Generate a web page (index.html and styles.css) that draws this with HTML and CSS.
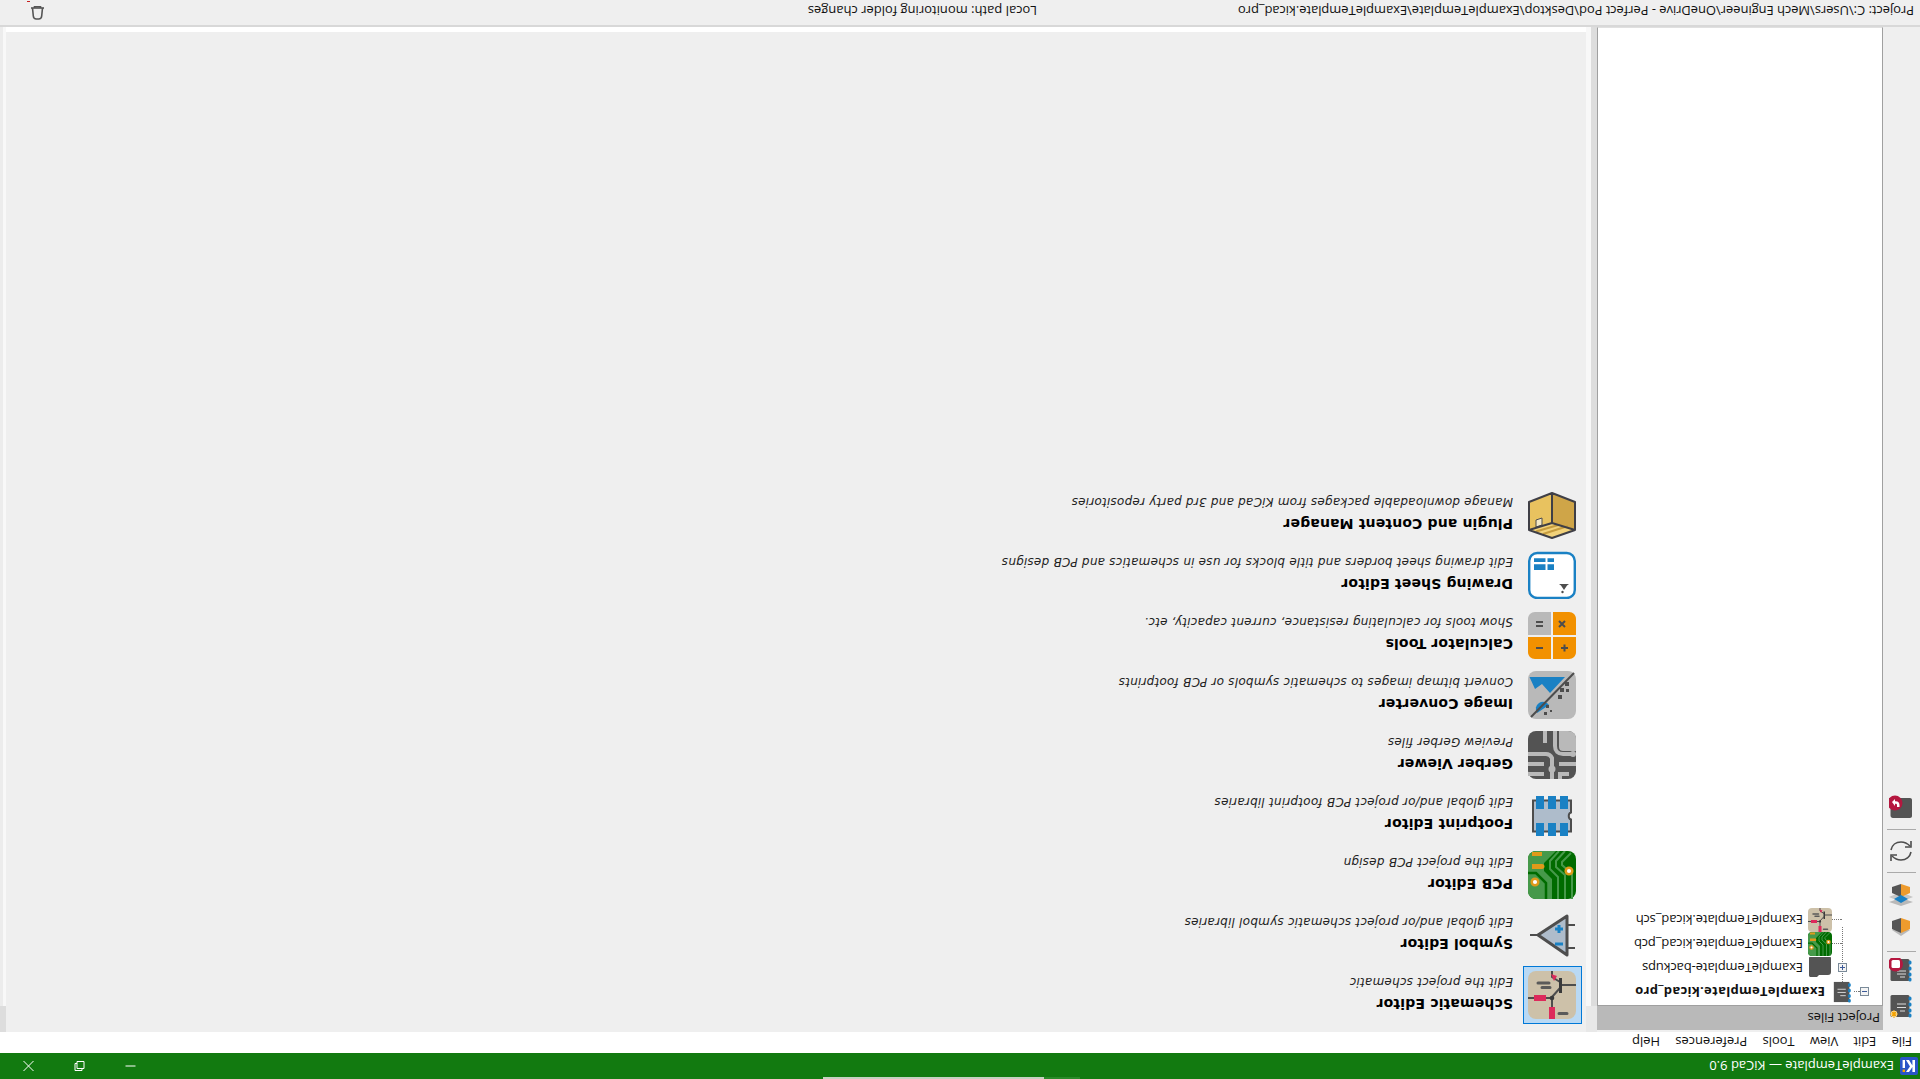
FILE: index.html
```html
<!DOCTYPE html>
<html lang="en">
<head>
<meta charset="utf-8">
<title>ExampleTemplate — KiCad 9.0</title>
<link rel="stylesheet" href="styles.css">
</head>
<body>
<div class="screen">
  <header class="titlebar">
    <div class="grab"></div>
    <svg class="app-icon" viewBox="0 0 18 18"><rect width="18" height="18" rx="2" fill="#2a55c8"/><path d="M3 3h2.6v5L9 3h3L8 8.6 12 15H9L5.6 9.6V15H3z" fill="#fff"/><rect x="13" y="7" width="2.4" height="8" fill="#fff"/><rect x="13" y="3" width="2.4" height="2.4" fill="#f7a600"/></svg>
    <span class="title-text">ExampleTemplate — KiCad 9.0</span>
    <div class="win-controls">
      <svg class="win" viewBox="0 0 12 12"><path d="M1 6h10" stroke="#fff"/></svg>
      <svg class="win" viewBox="0 0 12 12"><path d="M1.5 3.5h7v7h-7zM3.5 3.5v-2h7v7h-2" fill="none" stroke="#fff"/></svg>
      <svg class="win" viewBox="0 0 12 12"><path d="M1 1l10 10M11 1L1 11" stroke="#fff"/></svg>
    </div>
  </header>
  <nav class="menubar">
    <span class="menu-item">File</span><span class="menu-item">Edit</span><span class="menu-item">View</span><span class="menu-item">Tools</span><span class="menu-item">Preferences</span><span class="menu-item">Help</span>
  </nav>
  <div class="workspace">
    <aside class="toolbar">
      <svg class="tool" viewBox="0 0 24 24"><g transform="rotate(180 12 12)"><rect x="1.500" y="0" width="19" height="22" rx="1.500" fill="#545454"/><path d="M8 9h9M8 12.500h9M11 16h5" stroke="#ddd" stroke-width="1"/><path d="M21 3v1M21 9v1M21 15v1M21 20v1" stroke="#1a81c4" stroke-width="3" stroke-linecap="round"/><circle cx="5" cy="19" r="3.200" fill="#fff"/><path d="M5 15v8M1 19h8M2.500 16.500l5 5M7.500 16.500l-5 5" stroke="#f5a300" stroke-width="1.100"/></g></svg>
      <svg class="tool t-gap" viewBox="0 0 24 24"><g transform="rotate(180 12 12)"><rect x="1.500" y="1" width="19" height="22" rx="1.500" fill="#545454"/><path d="M8 13h9M8 16h9M11 19h5" stroke="#ddd" stroke-width="1"/><path d="M21 4v1M21 10v1M21 16v1M21 21v1" stroke="#1a81c4" stroke-width="3" stroke-linecap="round"/><circle cx="6.500" cy="6" r="7.500" fill="#b5173f"/><rect x="2.500" y="2" width="8.500" height="8" rx="1.500" fill="#fff"/></g></svg>
      <hr class="tool-sep s1">
      <svg class="tool t-after-sep" viewBox="0 0 24 24"><g transform="rotate(180 12 12)"><path d="M12 10l9 4-9 6-9-6z" fill="#b9b9b9"/><path d="M12 2l9 3v8l-9 4z" fill="#ee9b2d"/><path d="M12 2L3 5v8l9 4z" fill="#555"/></g></svg>
      <svg class="tool t-3d" viewBox="0 0 24 24"><g transform="rotate(180 12 12)"><path d="M12 14l12 4-12 4-12-4z" fill="#b9b9b9"/><path d="M12 8l12 5-12 5-12-5z" fill="#c6c6c6"/><path d="M12 0l9 3v6l-9 4z" fill="#ee9b2d"/><path d="M12 0L3 3v6l9 4z" fill="#555"/><path d="M12 11l7 4-7 4-7-4z" fill="#1a81c4"/></g></svg>
      <hr class="tool-sep s2">
      <svg class="tool t-after-sep2" viewBox="0 0 24 24"><g transform="rotate(180 12 12)" fill="none" stroke="#4d4d4d" stroke-width="1.600"><path d="M2 11c1-5 5-8 10-8 3.500 0 6.500 1.500 9 4"/><path d="M22 2v6h-6"/><path d="M22 13c-1 5-5 8-10 8-3.500 0-6.500-1.500-9-4"/><path d="M2 22v-6h6"/></g></svg>
      <hr class="tool-sep s3">
      <svg class="tool t-after-sep3" viewBox="0 0 24 24"><g transform="rotate(180 12 12)"><path d="M0 3h21c1.200 0 2 .8 2 2v16c0 1.200-.8 2-2 2H4c-1.500 0-2.500-1-2.500-2.500V10H0z" fill="#545454"/><circle cx="6" cy="8" r="7.500" fill="#b5173f"/><path d="M3 7l3-3v2.200c3-.3 4.500 1.300 4.500 3.800v2H8v-2c0-1-.7-1.500-2-1.300V11z" fill="#fff"/></g></svg>
    </aside>
    <section class="project-panel">
      <div class="panel-head">Project Files</div>
      <div class="tree">
        <span class="tree-line v"></span>
        <div class="tree-row root">
          <span class="expander minus"></span><span class="stub"></span>
          <svg class="tree-icon small" viewBox="0 0 24 24"><g transform="rotate(180 12 12)"><rect x="2" y="1" width="17" height="22" fill="#545454"/><path d="M6 9h9M6 12.500h9M9 16h6" stroke="#ddd"/><path d="M19 4v1M19 10v1M19 16v1M19 21v1" stroke="#1a81c4" stroke-width="3" stroke-linecap="round"/></g></svg>
          <span class="tree-label strong">ExampleTemplate.kicad_pro</span>
        </div>
        <div class="tree-row child">
          <span class="expander plus"></span>
          <svg class="tree-icon" viewBox="0 0 24 24"><path d="M2 1h20c.6 0 1 .4 1 1v14c0 2-1 3-3 3h-9l-2 2H3c-1.500 0-2-.5-2-2V2c0-.6.4-1 1-1z" transform="rotate(180 12 12)" fill="#545454"/></svg>
          <span class="tree-label backups">ExampleTemplate-backups</span>
        </div>
        <div class="tree-row child">
          <span class="dash"></span>
          <svg class="tree-icon" viewBox="0 0 48 48"><g transform="rotate(180 24 24)"><use href="#pcb-art"/></g></svg>
          <span class="tree-label">ExampleTemplate.kicad_pcb</span>
        </div>
        <div class="tree-row child">
          <span class="dash"></span>
          <svg class="tree-icon" viewBox="0 0 48 48"><g transform="rotate(180 24 24)"><use href="#sch-art"/></g></svg>
          <span class="tree-label">ExampleTemplate.kicad_sch</span>
        </div>
      </div>
    </section>
    <section class="center">
      <div class="sash-left"></div>
      <div class="launcher-col">
        <main class="launcher">
          <div class="launch-row selected">
            <span class="launch-icon"><svg viewBox="0 0 48 48"><g transform="rotate(180 24 24)"><use href="#sch-art"/></g></svg></span>
            <div class="launch-text"><strong>Schematic Editor</strong><em>Edit the project schematic</em></div>
          </div>
          <div class="launch-row">
            <span class="launch-icon"><svg viewBox="0 0 48 48"><g transform="rotate(180 24 24)"><path d="M2 24h8M39 14h8M39 37h8" stroke="#4d4d4d" stroke-width="2"/><path d="M10 24L39 5v39z" fill="#aebccb" stroke="#4d4d4d" stroke-width="3" stroke-linejoin="round"/><path d="M27 18h8M31 14v8M27 33h8" stroke="#1a81c4" stroke-width="3"/></g></svg></span>
            <div class="launch-text"><strong>Symbol Editor</strong><em>Edit global and/or project schematic symbol libraries</em></div>
          </div>
          <div class="launch-row">
            <span class="launch-icon"><svg viewBox="0 0 48 48"><g transform="rotate(180 24 24)"><use href="#pcb-art"/></g></svg></span>
            <div class="launch-text"><strong>PCB Editor</strong><em>Edit the project PCB design</em></div>
          </div>
          <div class="launch-row">
            <span class="launch-icon"><svg viewBox="0 0 48 48"><g transform="rotate(180 24 24)"><path d="M5 9.500h38v12c-3 .5-3 6.500 0 7v12H5z" fill="#aebccb" stroke="#4d4d4d" stroke-width="2"/><path d="M8 5h8v13H8zM20 5h8v13h-8zM32 5h8v13h-8zM8 32h8v13H8zM20 32h8v13h-8zM32 32h8v13h-8z" fill="#1a81c4"/></g></svg></span>
            <div class="launch-text"><strong>Footprint Editor</strong><em>Edit global and/or project PCB footprint libraries</em></div>
          </div>
          <div class="launch-row">
            <span class="launch-icon"><svg viewBox="0 0 48 48"><g transform="rotate(180 24 24)"><rect width="48" height="48" rx="8" fill="#535353"/><path d="M31 0h9c5 0 8 3 8 8v12H35c-2 0-4-1-4-4z" fill="#b9b9b9"/><path d="M0 23h18c3 0 5 2 6 4v21M0 33h16M0 43h16M48 33H31M41 43H32v5M27 0v15c0 5 3 8 8 8h10M17 0v12" fill="none" stroke="#b9b9b9" stroke-width="4"/><circle cx="45" cy="23" r="3" fill="#b9b9b9"/><circle cx="24" cy="38" r="3.500" fill="#b9b9b9"/></g></svg></span>
            <div class="launch-text"><strong>Gerber Viewer</strong><em>Preview Gerber files</em></div>
          </div>
          <div class="launch-row">
            <span class="launch-icon"><svg viewBox="0 0 48 48"><g transform="rotate(180 24 24)"><rect width="48" height="48" rx="8" fill="#b9b9b9"/><path d="M1.500 6H37L22 22l-8-9-7 5z" fill="#1a81c4"/><path d="M9 42a7 7 0 0 1 12-8z" fill="#1a81c4"/><path d="M46 2L3 46" stroke="#4d4d4d" stroke-width="2"/><path d="M37 11h4v4h-4zM32 17h4v4h-4zM30 24h4v4h-4zM38 18h3v3h-3zM18 34h3v3h-3zM16 41h3v3h-3zM22 39h2v2h-2z" fill="#4d4d4d"/></g></svg></span>
            <div class="launch-text"><strong>Image Converter</strong><em>Convert bitmap images to schematic symbols or PCB footprints</em></div>
          </div>
          <div class="launch-row">
            <span class="launch-icon"><svg viewBox="0 0 48 48"><g transform="rotate(180 24 24)"><path d="M7 1h16v23H0V8c0-4 3-7 7-7z" fill="#b9b9b9"/><path d="M25 1h16c4 0 7 3 7 7v16H25z" fill="#f29100"/><path d="M0 26h23v22H7c-4 0-7-3-7-7z" fill="#f29100"/><path d="M25 26h23v15c0 4-3 7-7 7H25z" fill="#f29100"/><path d="M8 11h7M8 15h7M31 10l6 6M37 10l-6 6M8 37h7M33 37h7M36.500 33.500v7" stroke="#4d4d4d" stroke-width="2"/></g></svg></span>
            <div class="launch-text"><strong>Calculator Tools</strong><em>Show tools for calculating resistance, current capacity, etc.</em></div>
          </div>
          <div class="launch-row">
            <span class="launch-icon"><svg viewBox="0 0 48 48"><g transform="rotate(180 24 24)"><rect x="1.200" y="2" width="45.600" height="45" rx="8" fill="#fff" stroke="#1a81c4" stroke-width="2.400"/><path d="M6 7.300h11.500V11H6zM19.500 7.300h6.500V11h-6.500zM6 13.300h11.500V19H6zM19.500 13.300h6.500V19h-6.500z" fill="#1a81c4"/><path d="M31 33h10l-2 1.500-3 4.500-3-4.500z" fill="#4d4d4d"/><circle cx="34.500" cy="41" r="1.200" fill="#4d4d4d"/></g></svg></span>
            <div class="launch-text"><strong>Drawing Sheet Editor</strong><em>Edit drawing sheet borders and title blocks for use in schematics and PCB designs</em></div>
          </div>
          <div class="launch-row">
            <span class="launch-icon"><svg viewBox="0 0 48 48"><g transform="rotate(180 24 24)"><path d="M24 32L1 39V11L24 2z" fill="#e8c25f"/><path d="M24 32l23 7V11L24 2z" fill="#cfa548"/><path d="M24 32L1 39l23 8 23-8z" fill="#f2d27a"/><path d="M8 40.500l24-7M15 43l25-8" stroke="#c69c3e" stroke-width="2"/><path d="M8 29l6-2v7l-6 2z" fill="#f3e8c8" stroke="#4d4d4d"/><path d="M24 2L1 11v28l23 8 23-8V11zM24 2v30M24 32L1 39M24 32l23 7" fill="none" stroke="#3f3f46" stroke-width="2" stroke-linejoin="round"/></g></svg></span>
            <div class="launch-text"><strong>Plugin and Content Manager</strong><em>Manage downloadable packages from KiCad and 3rd party repositories</em></div>
          </div>
        </main>
        <div class="panel-edge"></div>
      </div>
      <div class="sash-right"></div>
    </section>
  </div>
  <footer class="statusbar">
    <span class="status-project">Project: C:\Users\Mech Engineer\OneDrive - Perfect Pod\Desktop\ExampleTemplate\ExampleTemplate.kicad_pro</span>
    <span class="status-local">Local path: monitoring folder changes</span>
    <svg class="status-icon" viewBox="0 0 20 20"><g transform="rotate(180 10 10)" fill="none" stroke="#555" stroke-width="1.600"><path d="M4 5h13"/><path d="M7.500 5V3.700h6V5"/><path d="M5.500 5l.8 8c.2 2 1.200 3 3 3h2.400c1.800 0 2.800-1 3-3l.8-8"/></g></svg>
    <span class="status-speck"></span>
  </footer>
</div>
<svg class="defs" width="0" height="0">
  <defs>
    <g id="sch-art">
      <rect width="48" height="48" rx="8" fill="#cdc1a9"/>
      <path d="M24 0v6l8 5M32 17l-8 9v22M33 14h15M0 27h24" fill="none" stroke="#4d4d4d" stroke-width="2"/>
      <path d="M32.500 7v15" stroke="#3a3a3a" stroke-width="3"/>
      <circle cx="24" cy="27" r="2.300" fill="#3a3a3a"/>
      <path d="M23 3l6 2-3 5z" fill="#dd2a5b"/>
      <path d="M6 24h12v6H6zM21 36h6v12h-6z" fill="#dd2a5b"/>
      <path d="M10 12h11M14 16.500h8M31 42.500h8" stroke="#5a5a5a" stroke-width="3" stroke-linecap="round"/>
    </g>
    <g id="pcb-art">
      <rect width="48" height="48" rx="8" fill="#006b00"/>
      <path d="M0 8c0-4 3-8 8-8h20L16 12v8l8 8v20H8c-5 0-8-4-8-8z" fill="#46994a"/>
      <path d="M31 0L22 10v8l8 8v22M37 0L28 10v6l9 8v24M43 2L34 11v3l10 9v25" fill="none" stroke="#46994a" stroke-width="2"/>
      <path d="M0 22h8l10 10v16" fill="none" stroke="#006b00" stroke-width="2.500"/>
      <path d="M4 1h10v4H4zM4 13h10c1.500 0 2.500 1 2.500 2.500S15.500 18 14 18H4z" fill="#e09a1a"/>
      <circle cx="7" cy="31" r="3.300" fill="#fff" stroke="#e09a1a" stroke-width="2.500"/>
      <circle cx="41" cy="20" r="3.300" fill="#fff" stroke="#e09a1a" stroke-width="2.500"/>
    </g>
  </defs>
</svg>
</body>
</html>
```
FILE: styles.css
```css
* { box-sizing: border-box; }
html, body { margin: 0; padding: 0; width: 1920px; height: 1079px; overflow: hidden; background: #efefef; }
.screen {
  width: 1920px; height: 1079px; display: flex; flex-direction: column;
  transform: rotate(180deg);
  font: 13px/16px "Open Sans", "Noto Sans", sans-serif; color: #111; background: #efefef;
  position: relative; overflow: hidden;
}
.defs { position: absolute; }

.titlebar { height: 26px; flex: none; background: #127a10; color: #fff; display: flex; align-items: center; padding-left: 2px; position: relative; }
.grab { position: absolute; top: 0; left: 876px; width: 221px; height: 2px; background: #c6d2c2; }
.grab::before { content: ""; position: absolute; left: -36px; width: 36px; height: 2px; background: #2b8a29; }
.app-icon { width: 18px; height: 18px; flex: none; }
.title-text { margin-left: 6px; }
.win-controls { margin-left: auto; display: flex; }
.win { width: 51px; height: 12px; }
.win:nth-child(3) { margin-right: 3px; }

.menubar { height: 21px; flex: none; background: #fff; display: flex; align-items: center; padding-left: 8px; gap: 15.300px; letter-spacing: -0.050px; }
.menu-item { display: block; }

.workspace { flex: 1; display: flex; min-height: 0; }
.toolbar { width: 37px; flex: none; display: flex; flex-direction: column; align-items: center; padding-top: 13px; }
.tool { width: 24px; height: 24px; flex: none; }
.t-gap { margin-top: 13px; }
.tool-sep { width: 29px; height: 1px; margin: 0; border: 0; background: #aaa; flex: none; }
.s1 { margin-top: 6px; }
.t-after-sep { margin-top: 11px; }
.t-3d { margin-top: 8px; }
.s2 { margin-top: 11px; }
.t-after-sep2 { margin-top: 9px; }
.s3 { margin-top: 9px; }
.t-after-sep3 { margin-top: 10px; }

.project-panel { width: 286px; flex: none; display: flex; flex-direction: column; padding-top: 2px; }
.panel-head { height: 24px; flex: none; background: #b9b9b9; padding: 4px 0 0 3px; }
.tree { flex: 1; background: #fff; border: 1px solid #a0a0a0; border-bottom-color: #e0e0e0; padding-top: 1px; position: relative; }
.tree-line.v { position: absolute; left: 39px; top: 14px; height: 64px; border-left: 1px dotted #777; }
.tree-row { height: 24px; display: flex; align-items: center; position: relative; }
.tree-row.root { padding-left: 13px; }
.tree-row.child { padding-left: 35px; }
.expander { width: 9px; height: 9px; border: 1px solid #7a8a99; background: #f4f4f4; flex: none; position: relative; z-index: 1; }
.expander::before { content: ""; position: absolute; left: 1px; top: 3px; width: 5px; height: 1px; background: #3c5a99; }
.expander.plus::after { content: ""; position: absolute; left: 3px; top: 1px; width: 1px; height: 5px; background: #3c5a99; }
.stub { width: 6px; border-top: 1px dotted #777; flex: none; }
.dash { width: 10px; margin-left: 5px; border-top: 1px dotted #777; flex: none; }
.tree-icon { width: 24px; height: 24px; flex: none; margin-left: 6px; }
.tree-icon.small { margin-left: 0; width: 22px; height: 22px; }
.dash + .tree-icon { margin-left: 0; }
.tree-label { margin-left: 4px; white-space: nowrap; letter-spacing: -0.100px; }
.tree-label.backups { margin-left: 5px; }
.dash + .tree-icon + .tree-label { margin-left: 5px; }
.tree-label.strong { font-weight: 700; margin-left: 7px; letter-spacing: 0.300px; }

.center { flex: 1; display: flex; min-width: 0; }
.sash-left, .sash-right { flex: none; }
.sash-left { width: 11px; background: linear-gradient(#e8e8e8 0 26px, transparent 26px), linear-gradient(90deg, #ddd 6px, #f8f8f8 6px); }
.sash-right { width: 6px; background: linear-gradient(#ddd 0 26px, transparent 26px), linear-gradient(90deg, #f8f8f8 3px, #ececec 3px); }
.launcher-col { flex: 1; display: flex; flex-direction: column; min-width: 0; }
.launcher { flex: 1; padding: 7px 0 0 4px; background: #efefef; }
.panel-edge { height: 5px; flex: none; background: #fff; }

.launch-row { height: 60px; display: flex; align-items: center; }
.launch-icon { width: 59px; height: 58px; flex: none; display: flex; align-items: center; justify-content: center; border: 1px solid transparent; }
.launch-icon svg { width: 48px; height: 48px; display: block; }
.selected .launch-icon { background: #b9d9f4; border-color: #0078d7; }
.launch-text { margin: 2px 0 0 10px; display: flex; flex-direction: column; gap: 7px; white-space: nowrap; font-family: "DejaVu Sans", sans-serif; }
.launch-text strong { font-size: 14px; line-height: 16px; font-weight: 700; color: #000; letter-spacing: 0.150px; }
.launch-text em { font-size: 12px; line-height: 14px; color: #222; letter-spacing: 0.220px; }

.statusbar { height: 27px; flex: none; border-top: 2px solid #d8d8d8; display: flex; padding: 6px 0 0 6px; position: relative; }
.status-project { width: 877px; flex: none; white-space: nowrap; letter-spacing: -0.050px; }
.status-local { white-space: nowrap; }
.status-icon { width: 20px; height: 20px; margin-left: auto; margin-right: 27px; margin-top: -4px; }
.status-speck { position: absolute; right: 27px; bottom: 1px; width: 3px; height: 1px; background: #c8201f; }
```
